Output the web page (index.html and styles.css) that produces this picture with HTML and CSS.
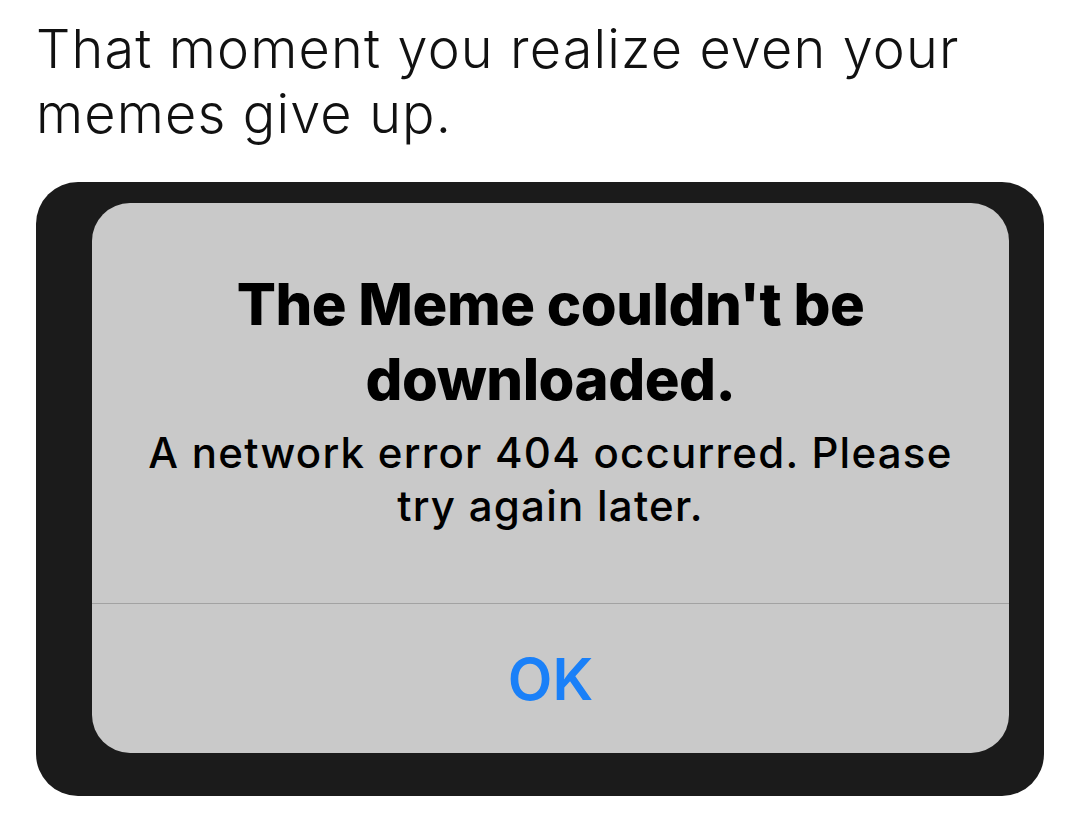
FILE: index.html
```html
<!DOCTYPE html>
<html lang="en">
<head>
  <meta charset="UTF-8" />
  <meta name="viewport" content="width=device-width, initial-scale=1.0" />
  <title>Meme</title>
  <link rel="stylesheet" href="styles.css">
</head>
<body>
  <p class="caption">That moment you realize even your<br>memes give up.</p>
  <div class="frame">
    <div class="alert">
      <div class="alert-body">
        <h1 class="alert-title">The Meme couldn't be<br>downloaded.</h1>
        <p class="alert-message">A network error 404 occurred. Please<br>try again later.</p>
      </div>
      <button class="alert-btn" type="button">OK</button>
    </div>
  </div>
</body>
</html>
```

FILE: styles.css
```css
body {
  margin: 0;
  padding: 0;
  background-color: #ffffff;
  font-family: "Inter", "Liberation Sans", sans-serif;
}

.caption {
  margin: 16px 0 0 36px;
  font-size: 54px;
  font-weight: 300;
  line-height: 65px;
  letter-spacing: 1.15px;
  color: #111;
}

.frame {
  margin: 36px 0 0 36px;
  width: 1008px;
  height: 614px;
  box-sizing: border-box;
  padding: 21px 35px 43px 56px;
  background-color: #1b1b1b;
  border-radius: 42px;
}

.alert {
  height: 100%;
  background-color: #c9c9c9;
  border-radius: 38px;
  display: flex;
  flex-direction: column;
  overflow: hidden;
}

.alert-body {
  height: 401px;
  box-sizing: border-box;
  padding-top: 64px;
  border-bottom: 1px solid #a2a2a2;
  text-align: center;
  color: #000;
}

.alert-title {
  margin: 0;
  font-size: 58px;
  font-weight: 800;
  line-height: 75px;
  letter-spacing: -0.5px;
}

.alert-message {
  margin: 9px 0 0;
  font-size: 42px;
  font-weight: 500;
  line-height: 53px;
  letter-spacing: 1.25px;
}

.alert-btn {
  flex: 1;
  border: none;
  background: none;
  font-family: inherit;
  font-size: 58px;
  font-weight: 600;
  color: #1a80f8;
  cursor: pointer;
}
```
